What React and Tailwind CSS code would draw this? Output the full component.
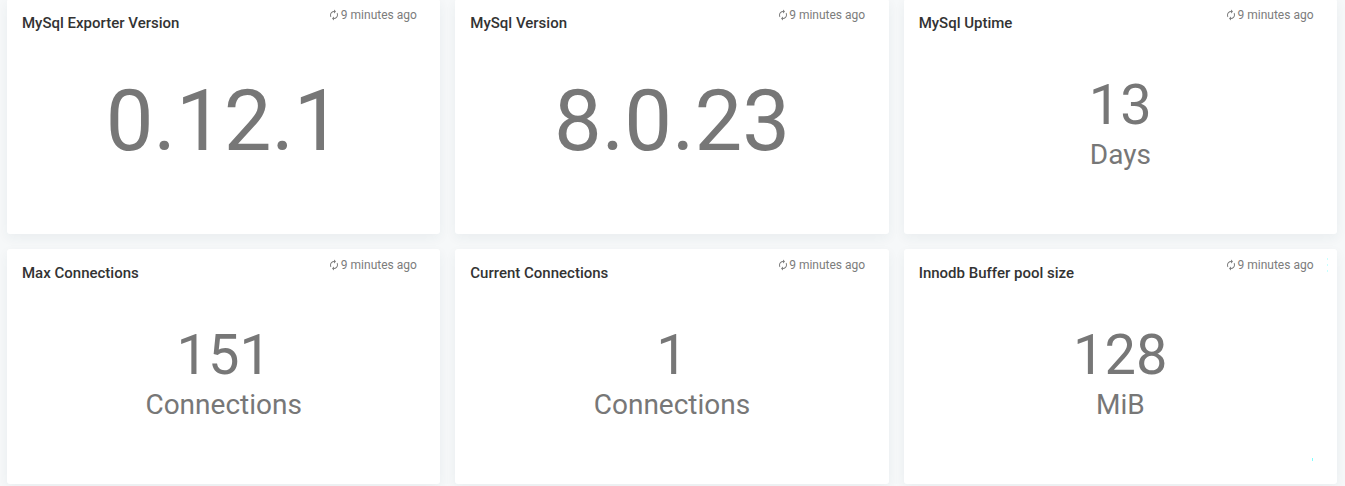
import React from 'react';

const cards = [
  { title: 'MySql Exporter Version', value: '0.12.1' },
  { title: 'MySql Version', value: '8.0.23' },
  { title: 'MySql Uptime', value: '13', unit: 'Days' },
  { title: 'Max Connections', value: '151', unit: 'Connections' },
  { title: 'Current Connections', value: '1', unit: 'Connections' },
  { title: 'Innodb Buffer pool size', value: '128', unit: 'MiB', handles: true },
];

function RefreshIcon() {
  return (
    <svg viewBox="0 0 24 24" className="h-3 w-3 shrink-0" fill="currentColor">
      <path d="M12 6v3l4-4-4-4v3c-4.42 0-8 3.58-8 8 0 1.57.46 3.03 1.24 4.26L6.7 14.8c-.45-.83-.7-1.79-.7-2.8 0-3.31 2.69-6 6-6zm6.76 1.74L17.3 9.2c.44.84.7 1.79.7 2.8 0 3.31-2.69 6-6 6v-3l-4 4 4 4v-3c4.42 0 8-3.58 8-8 0-1.57-.46-3.03-1.24-4.26z" />
    </svg>
  );
}

function Card({ title, value, unit, handles }) {
  return (
    <section className="relative flex flex-col rounded-[3px] bg-white shadow-[0_4px_12px_rgba(40,70,80,0.06)]">
      <header className="flex h-[50px] items-start justify-between pr-[23.5px] pl-[15px]">
        <h2 className="pt-[14px] text-[15px] leading-5 font-medium text-[#333333]">{title}</h2>
        <div className="flex items-center gap-[0.5px] pt-[8px] text-xs leading-4 text-[#7c7c7c]">
          <RefreshIcon />
          <span>9 minutes ago</span>
        </div>
      </header>
      {unit ? (
        <div className="flex flex-col items-center pt-[28px] text-[#777777]">
          <div className="text-[56px] leading-[56px]">{value}</div>
          <div className="pt-[5px] text-[28px] leading-[34px]">{unit}</div>
        </div>
      ) : (
        <div className="pt-[28px] text-center text-[85px] leading-[88px] text-[#777777]">{value}</div>
      )}
      {handles && (
        <>
          <div className="absolute top-[9px] right-[9px] flex flex-col gap-1">
            <span className="h-0.5 w-px bg-[#c8ffff]" />
            <span className="h-0.5 w-px bg-[#c8ffff]" />
            <span className="h-0.5 w-px bg-[#c8ffff]" />
          </div>
          <span className="absolute right-6 bottom-[23px] h-[3px] w-px bg-[#80ffff]" />
        </>
      )}
    </section>
  );
}

export default function App() {
  return (
    <main className="h-[486px] overflow-hidden bg-[#f6f8f9] pr-2 pl-[7px] font-['Roboto',sans-serif]">
      <div className="-mt-px grid auto-rows-[235px] grid-cols-3 gap-[15px]">
        {cards.map((card) => <Card key={card.title} {...card} />)}
      </div>
    </main>
  );
}
